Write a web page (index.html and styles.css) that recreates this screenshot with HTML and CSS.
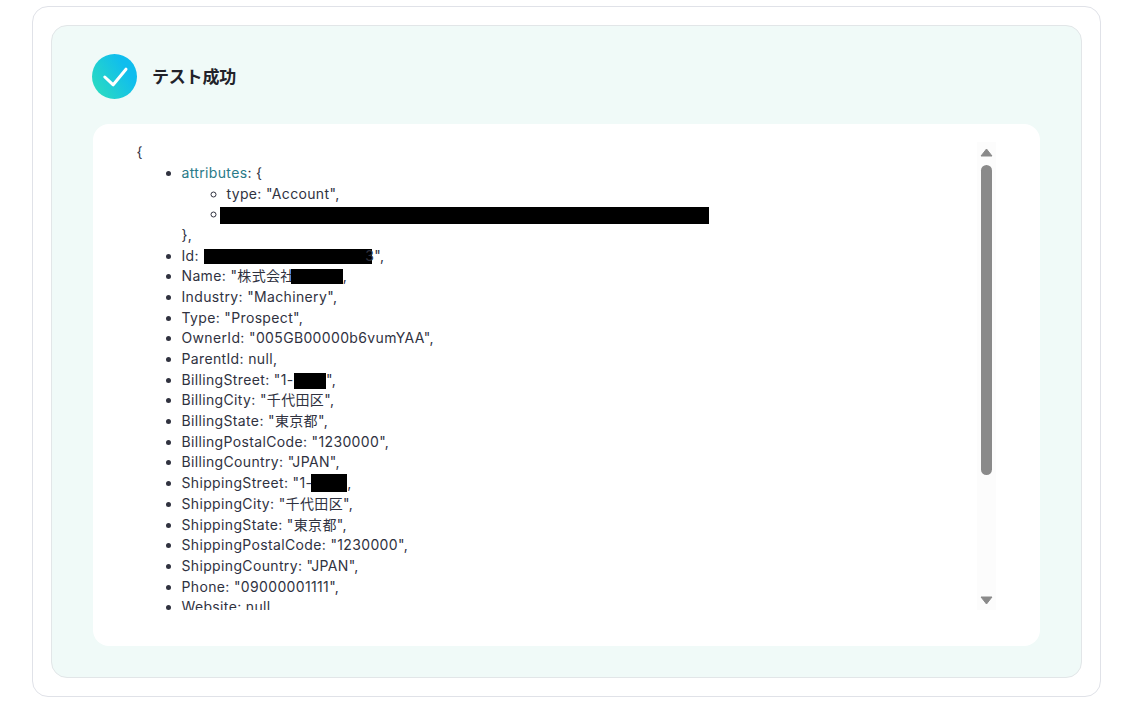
FILE: index.html
```html
<!DOCTYPE html>
<html lang="ja">
<head>
<meta charset="utf-8">
<title>テスト成功</title>
<link rel="stylesheet" href="styles.css">
</head>
<body>
<div class="outer">
  <div class="inner">
    <div class="head">
      <svg class="check" viewBox="0 0 45 45" width="45" height="45" aria-hidden="true">
        <defs><linearGradient id="g" x1="0" y1="1" x2="1" y2="0.35"><stop offset="0.1" stop-color="#2bdcc0"/><stop offset="0.85" stop-color="#10bdee"/></linearGradient></defs>
        <circle cx="22.5" cy="22.5" r="22.5" fill="url(#g)"/>
        <path d="M12.8 23l8.4 7.8L34 15.2" fill="none" stroke="#fff" stroke-width="3" stroke-linecap="round" stroke-linejoin="round"/>
      </svg>
      <h2 class="title">テスト成功</h2>
    </div>
    <div class="panel">
      <div class="scroll">
        <div class="code">
          <div>{</div>
          <ul class="l1">
            <li><span class="key">attributes</span>: {
              <ul class="l2">
                <li>type: "Account",</li>
                <li><span class="mask mask-url"></span></li>
              </ul>
              },
            </li>
            <li>Id: <span class="mask mask-id"></span>3",</li>
            <li>Name: "株式会社<span class="mask mask-name"></span>,</li>
            <li>Industry: "Machinery",</li>
            <li>Type: "Prospect",</li>
            <li>OwnerId: "005GB00000b6vumYAA",</li>
            <li>ParentId: null,</li>
            <li>BillingStreet: "1-<span class="mask mask-bs"></span>",</li>
            <li>BillingCity: "千代田区",</li>
            <li>BillingState: "東京都",</li>
            <li>BillingPostalCode: "1230000",</li>
            <li>BillingCountry: "JPAN",</li>
            <li>ShippingStreet: "1-<span class="mask mask-ss"></span>,</li>
            <li>ShippingCity: "千代田区",</li>
            <li>ShippingState: "東京都",</li>
            <li>ShippingPostalCode: "1230000",</li>
            <li>ShippingCountry: "JPAN",</li>
            <li>Phone: "09000001111",</li>
            <li>Website: null,</li>
          </ul>
        </div>
      </div>
      <div class="bar">
        <svg class="arrow" viewBox="0 0 13 9" width="13" height="9" aria-hidden="true"><path d="M6.5 1L12 8H1z" fill="#8a8a8a" stroke="#8a8a8a" stroke-linejoin="round"/></svg>
        <span class="thumb"></span>
        <svg class="arrow arrow-down" viewBox="0 0 13 9" width="13" height="9" aria-hidden="true"><path d="M1 1h11L6.5 8z" fill="#8a8a8a" stroke="#8a8a8a" stroke-linejoin="round"/></svg>
      </div>
    </div>
  </div>
</div>
</body>
</html>
```
FILE: styles.css
```css
* { box-sizing: border-box; }
html, body { margin: 0; padding: 0; background: #fff; }
body {
  padding: 6px 21px 6px 32px;
  font-family: Inter, "Noto Sans CJK JP", sans-serif;
  color: #30323f;
}
.outer {
  height: 691px;
  border: 1px solid #e0e2e8;
  border-radius: 16px;
  padding: 18px;
}
.inner {
  height: 653px;
  background: #f0faf8;
  border: 1px solid #e2e6e8;
  border-radius: 16px;
  padding: 28px 41px 31px 40px;
  display: flex;
  flex-direction: column;
}
.head {
  display: flex;
  align-items: center;
  gap: 15px;
  height: 45px;
  margin-bottom: 25px;
}
.check { display: block; flex: none; }
.title {
  margin: 0 0 3px;
  font-size: 17px;
  font-weight: 700;
  letter-spacing: -0.2px;
  color: #22222a;
}
.panel {
  flex: 1;
  margin-left: 1px;
  background: #fff;
  border-radius: 16px;
  padding: 18px 44px 36px 43.5px;
  display: flex;
  min-height: 0;
}
.scroll {
  flex: 1;
  overflow: hidden;
  min-width: 0;
  padding-top: 0.42px;
}
.code {
  font-size: 14px;
  line-height: 20.67px;
  letter-spacing: 0.35px;
}
.code ul { margin: 0; padding: 0 0 0 45px; }
.l1 { list-style: disc; }
.l2 { list-style: circle; }
.key { color: #2a7a88; }
.mask {
  display: inline-block;
  background: #000;
  vertical-align: top;
}
.mask-url { width: 489px; height: 17px; margin: 2.5px 0 0 -7px; }
.mask-id { width: 168px; height: 15px; margin: 3px -7px 0 1px; }
.mask-name { width: 52px; height: 15px; margin: 3px 0 0 -4px; }
.mask-bs { width: 32px; height: 16px; margin: 3px 0 0 0.5px; }
.mask-ss { width: 36px; height: 18px; margin: 1px 0 0 -1px; }
.bar {
  flex: none;
  width: 19px;
  background: #fcfcfc;
  display: flex;
  flex-direction: column;
  align-items: center;
}
.thumb {
  flex: none;
  width: 11px;
  height: 310px;
  margin-top: 8px;
  background: #8a8a8a;
  border-radius: 6px;
}
.arrow { display: block; flex: none; margin-top: 6px; }
.arrow-down { margin-top: auto; margin-bottom: 5px; }
```
